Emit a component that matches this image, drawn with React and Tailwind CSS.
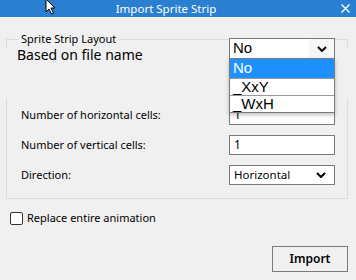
import React from "react";

const Chevron = ({ className }) => (
  <svg className={className} width="10" height="6" viewBox="0 0 10 6">
    <path d="M1 1 L5 5 L9 1" fill="none" stroke="#000" strokeWidth="2" />
  </svg>
);

export default function App() {
  return (
    <div className="relative w-[356px] h-[280px] overflow-hidden bg-[#f0f0f0] font-['Noto_Sans',sans-serif] text-[#000]">
      {/* Title bar */}
      <div className="relative flex h-[17px] items-center justify-center bg-[#2b7fd0] pr-[24px] text-[11.5px] leading-none text-white">
        <span>Import Sprite Strip</span>
        <svg className="absolute right-[6px] top-[4px]" width="9" height="9" viewBox="0 0 9 9">
          <path d="M0.5 0.5 L8.5 8.5 M8.5 0.5 L0.5 8.5" stroke="#fff" strokeWidth="1.3" />
        </svg>
      </div>

      {/* Group box */}
      <div className="ml-[6px] mt-[22px] w-[342px]">
        <div className="relative h-[9px] border-x border-t border-[#dcdcdc]">
          <span className="absolute left-[12px] top-[-8px] bg-[#f0f0f0] px-[2px] text-[11px] leading-[14px]">
            Sprite Strip Layout
          </span>
          <div className="absolute left-[222px] top-[-2px] flex h-[21px] w-[106px] items-center justify-between border border-[#7a7a7a] bg-white pl-[3px] font-['Liberation_Sans',sans-serif] text-[15px]">
            <span>No</span>
            <div className="flex h-full w-[25px] items-center justify-center bg-[#f7f7f7]">
              <Chevron />
            </div>
          </div>
        </div>
        <div className="h-[53px] pl-[11px]">
          <div className="mt-[-3px] text-[14px] leading-[20px]">Based on file name</div>
        </div>
        <div className="flex flex-col gap-[10px] border-x border-b border-[#dcdcdc] pb-[13px] pl-[14px] pt-[7px] text-[11px]">
          <div className="flex h-[20px] items-center">
            <span className="w-[208px]">Number of horizontal cells:</span>
            <div className="flex h-[20px] w-[106px] items-center border border-[#7a7a7a] bg-white pl-[4px] text-[12px]">1</div>
          </div>
          <div className="flex h-[20px] items-center">
            <span className="w-[208px]">Number of vertical cells:</span>
            <div className="flex h-[20px] w-[106px] items-center border border-[#7a7a7a] bg-white pl-[4px] text-[12px]">1</div>
          </div>
          <div className="flex h-[20px] items-center">
            <span className="w-[208px]">Direction:</span>
            <div className="flex h-[20px] w-[106px] items-center justify-between border border-[#7a7a7a] bg-white pl-[4px] pr-[8px] text-[11.5px]">
              <span>Horizontal</span>
              <Chevron />
            </div>
          </div>
        </div>
      </div>

      {/* Checkbox */}
      <div className="ml-[10px] mt-[11px] flex items-center gap-[4px] text-[11px]">
        <div className="h-[13px] w-[13px] rounded-[2px] border border-[#333] bg-white"></div>
        <span>Replace entire animation</span>
      </div>

      {/* Button */}
      <div className="mr-[8px] mt-[19px] flex justify-end">
        <div className="flex h-[26px] w-[76px] items-center justify-center border border-[#7a7a7a] bg-[#f0f0f0] text-[12px] font-semibold">
          Import
        </div>
      </div>

      {/* Dropdown list overlay */}
      <div className="absolute left-[229px] top-[58px] z-10 w-[106px] border border-[#7a7a7a] bg-white font-['Liberation_Sans',sans-serif] text-[15px] leading-[16px] shadow-[0_2px_4px_rgba(0,0,0,0.25)]">
        <div className="h-[19px] bg-[#1e90ff] pl-[3px] pt-[1px] text-white">No</div>
        <div className="h-[17px] border-t border-[#9a9a9a] pl-[3px]">_XxY</div>
        <div className="h-[17px] border-t border-[#9a9a9a] pl-[3px]">_WxH</div>
      </div>

      {/* Mouse cursor */}
      <svg className="absolute left-[45px] top-[-2px] z-20" width="13" height="18" viewBox="0 0 13 18">
        <path d="M1 1 L1 14 L4 11 L6.5 16 L8.5 15 L6 10 L10 10 Z" fill="#fff" stroke="#000" strokeWidth="1" />
      </svg>
    </div>
  );
}
